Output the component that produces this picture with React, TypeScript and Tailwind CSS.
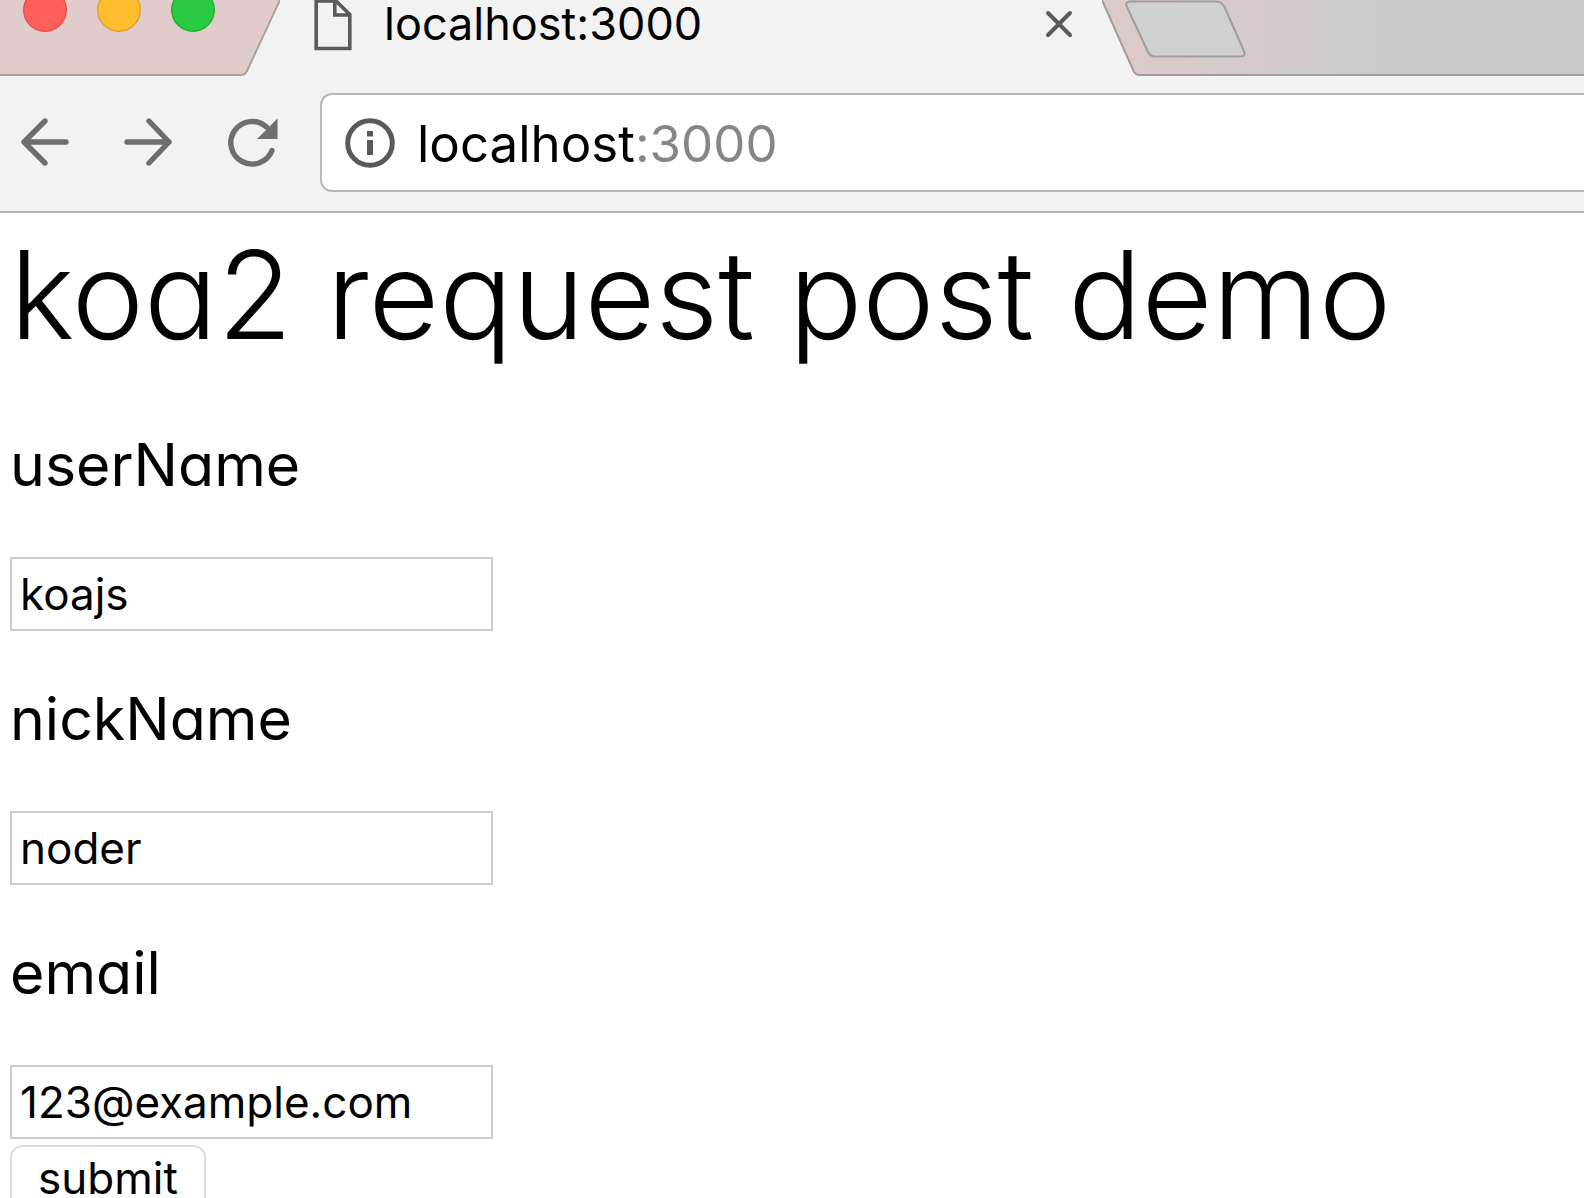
import { useState } from "react";

const lights = [
  { label: "Close window", fill: "#ff5f5a", stroke: "#e2504c" },
  { label: "Minimize window", fill: "#ffbe2f", stroke: "#e0a02c" },
  { label: "Zoom window", fill: "#2acb42", stroke: "#22ad33" },
];

function TabStrip() {
  return (
    <div className="flex h-[76px] overflow-hidden bg-[#f2f2f2]">
      <div className="flex shrink-0 bg-[#e0cccb]">
        <div className="flex items-start gap-[30px] border-b-2 border-[#b09f9f] pl-[23px]">
          {lights.map((light) => (
            <button key={light.label} aria-label={light.label}>
              <svg width="44" height="33" viewBox="0 0 44 33" className="block">
                <circle
                  cx="22"
                  cy="10"
                  r="21.3"
                  fill={light.fill}
                  stroke={light.stroke}
                  strokeWidth="1.4"
                />
              </svg>
            </button>
          ))}
        </div>
        <svg width="65" height="76" viewBox="0 0 65 76" className="block">
          <path d="M65 0 L32 71 Q30 75 26 75 H0 V76 H65 Z" fill="#f2f2f2" />
          <path
            d="M65 0 L32 71 Q30 75 26 75 H0"
            fill="none"
            stroke="#b09f9f"
            strokeWidth="2"
          />
        </svg>
      </div>
      <div className="flex w-[822px] shrink-0 items-start pr-[29px] pl-[34px]">
        <svg width="38" height="51" viewBox="0 0 38 51" className="block">
          <path
            d="M2.2 1 H22 L35.8 14.5 V48.5 H2.2 Z M20.8 0 V15 H35.8"
            fill="none"
            stroke="#5a5a5a"
            strokeWidth="3.6"
          />
        </svg>
        <span className="ml-[32px] flex-1 text-[45px] leading-[48px] text-black">
          localhost:3000
        </span>
        <button aria-label="Close tab" className="pt-[10px]">
          <svg width="28" height="28" viewBox="0 0 28 28" className="block">
            <path
              d="M3 3 L25 25 M25 3 L3 25"
              stroke="#5a5a5a"
              strokeWidth="4"
              strokeLinecap="round"
            />
          </svg>
        </button>
      </div>
      <div className="flex flex-1 bg-linear-to-r from-[#dccac8] via-[#cfcbcc] to-[#c8c8c8]">
        <svg width="150" height="76" viewBox="0 0 150 76" className="block">
          <path d="M0 0 L32 72 Q34 75 37 75 H150 V76 H0 Z" fill="#f2f2f2" />
          <path
            d="M0 0 L32 72 Q34 75 37 75 H150"
            fill="none"
            stroke="#a39b9b"
            strokeWidth="2"
          />
          <path
            d="M28 1.5 H114 Q120 1.5 122.5 7 L141.5 50 Q144.5 56.5 139 56.5 H53 Q48 56.5 45.5 51 L25 7 Q22.5 1.5 28 1.5 Z"
            fill="#d0d0d0"
            stroke="#a19d9d"
            strokeWidth="2"
          />
        </svg>
        <div className="flex-1 border-b-2 border-[#a19e9f]" />
      </div>
    </div>
  );
}

function Toolbar() {
  return (
    <div className="flex h-[137px] items-start overflow-hidden border-b-2 border-[#b8b8b8] bg-[#f2f2f2] pt-[17px] pl-[20px]">
      <div className="flex h-[98px] shrink-0 items-center gap-[51px]">
        <button aria-label="Back">
          <svg width="52" height="52" viewBox="0 0 52 52" className="block">
            <path
              d="M46 26 H4 M25 5 L4 26 L25 47"
              fill="none"
              stroke="#6e6e6e"
              strokeWidth="5.4"
              strokeLinecap="round"
              strokeLinejoin="round"
            />
          </svg>
        </button>
        <button aria-label="Forward">
          <svg width="52" height="52" viewBox="0 0 52 52" className="block">
            <path
              d="M4 26 H46 M26 5 L46 26 L26 47"
              fill="none"
              stroke="#6e6e6e"
              strokeWidth="5.4"
              strokeLinecap="round"
              strokeLinejoin="round"
            />
          </svg>
        </button>
        <button aria-label="Reload">
          <svg width="54" height="52" viewBox="0 0 54 52" className="block">
            <path
              d="M46 34.5 A21.3 21.3 0 1 1 40.5 11"
              fill="none"
              stroke="#6e6e6e"
              strokeWidth="5.4"
              strokeLinecap="round"
            />
            <path d="M51.5 2.5 V23 H31 Z" fill="#6e6e6e" />
          </svg>
        </button>
      </div>
      <div className="ml-[40px] flex h-[99px] flex-1 items-center rounded-l-[12px] border-2 border-r-0 border-[#b8b8b8] bg-white pl-[23px]">
        <svg width="50" height="50" viewBox="0 0 50 50" className="block shrink-0">
          <circle cx="25" cy="25" r="22.3" fill="none" stroke="#5a5a5a" strokeWidth="5" />
          <path d="M22 13 H28 V18.5 H22 Z M22 22 H28 V37 H22 Z" fill="#5a5a5a" />
        </svg>
        <div className="ml-[22px] pt-[2px] text-[51px] leading-[64px] text-black">
          localhost<span className="text-[#868686]">:3000</span>
        </div>
      </div>
    </div>
  );
}

export default function App() {
  const [values, setValues] = useState({
    userName: "koajs",
    nickName: "noder",
    email: "123@example.com",
  });

  return (
    <div className="h-screen overflow-hidden bg-white font-['Inter',sans-serif]">
      <TabStrip />
      <Toolbar />
      <form
        className="flex flex-col items-start px-[10px] text-black"
        onSubmit={(e) => e.preventDefault()}
      >
        <h1 className="text-[122px] leading-[164px] font-light whitespace-nowrap [font-feature-settings:'cv11']">
          koa2 request post demo
        </h1>
        {(Object.keys(values) as (keyof typeof values)[]).map((name) => (
          <div key={name} className="flex flex-col pt-[51px]">
            <label
              htmlFor={name}
              className="text-[59px] leading-[74px] font-normal [font-feature-settings:'cv11']"
            >
              {name}
            </label>
            <input
              id={name}
              name={name}
              className="mt-[55px] h-[74px] w-[483px] border-2 border-[#cccccc] px-[8px] text-[44px] focus:outline-none"
              value={values[name]}
              onChange={(e) => setValues({ ...values, [name]: e.target.value })}
            />
          </div>
        ))}
        <button
          type="submit"
          className="mt-[6px] h-[66px] rounded-[12px] border-2 border-[#dddddd] px-[26px] text-[44px] leading-[54px]"
        >
          submit
        </button>
      </form>
    </div>
  );
}
